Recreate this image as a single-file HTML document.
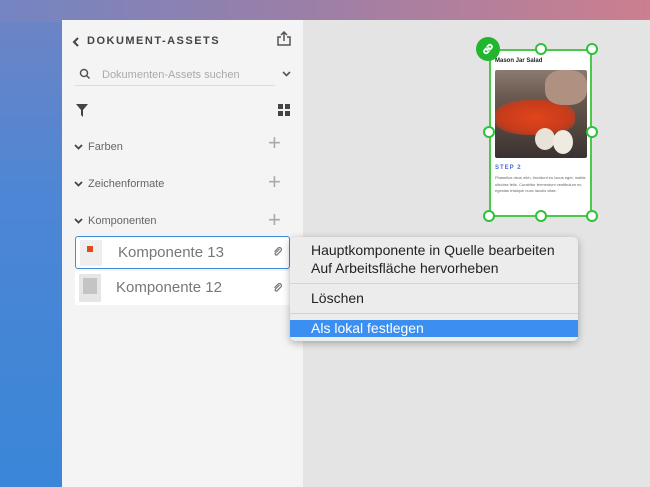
<!DOCTYPE html><html><head><meta charset="utf-8"><style>
*{margin:0;padding:0;box-sizing:border-box}
body{width:650px;height:487px;overflow:hidden;position:relative;font-family:"Liberation Sans",sans-serif;background:linear-gradient(180deg,#6f84c4 0%,#4d86d4 40%,#3a86d8 100%)}
.top{position:absolute;left:0;top:0;width:650px;height:22px;background:linear-gradient(90deg,#7385c2 0%,#9a7fa8 45%,#cc7f8e 100%)}
.canvas{position:absolute;left:303px;top:20px;width:347px;height:467px;background:#e4e4e4}
.panel{position:absolute;left:62px;top:20px;width:241px;height:467px;background:#f4f4f4;color:#555}
.a{position:absolute}
.t{font-size:11px;color:#666}
.plus{position:absolute;font-size:22px;color:#aaa;font-weight:300}
.row{position:absolute;left:13px;width:215px;background:#fff}
.menu{position:absolute;left:290px;top:237px;width:288px;height:104px;background:#ececec;border-radius:5px;box-shadow:0 2px 8px rgba(0,0,0,.3);font-size:14px;color:#222}
.menu div{position:absolute;left:21px}
.sep{position:absolute;left:0;width:288px;height:1px;background:#d4d4d4}
.h{position:absolute;width:12px;height:12px;border:2px solid #2ec23a;border-radius:50%;background:#fff}
</style></head><body>
<div class="top"></div>
<div class="canvas"></div>
<div class="panel">
<svg class="a" style="left:10px;top:17px" width="8" height="10" viewBox="0 0 8 10" fill="none" stroke="#444" stroke-width="2"><path d="M6 1L2 5l4 4"/></svg>
<div class="a" style="left:25px;top:15px;font-size:11px;font-weight:bold;letter-spacing:1.5px;color:#444">DOKUMENT-ASSETS</div>
<svg class="a" style="left:214px;top:11px" width="16" height="16" viewBox="0 0 16 16" fill="none" stroke="#555" stroke-width="1.5"><path d="M5 6H2v8h12V6h-3M8 10V1M5 4l3-3 3 3"/></svg>
<svg class="a" style="left:17px;top:48px" width="12" height="12" viewBox="0 0 12 12" fill="none" stroke="#555" stroke-width="1.5"><circle cx="5" cy="5" r="3.5"/><path d="M7.5 7.5l3 3"/></svg>
<div class="a t" style="left:40px;top:49px;color:#aaa">Dokumenten-Assets suchen</div>
<svg class="a" style="left:220px;top:51px" width="9" height="6" viewBox="0 0 9 6" fill="none" stroke="#555" stroke-width="1.6"><path d="M1 1l3.5 3.5L8 1"/></svg>
<div class="a" style="left:13px;top:65px;width:200px;height:1px;background:#ddd"></div>
<svg class="a" style="left:14px;top:84px" width="12" height="13" viewBox="0 0 12 13"><path d="M0 0h12L7 6v7L5 11V6z" fill="#444"/></svg>
<svg class="a" style="left:216px;top:84px" width="12" height="12"><rect x="0" y="0" width="5" height="5" fill="#444"/><rect x="7" y="0" width="5" height="5" fill="#444"/><rect x="0" y="7" width="5" height="5" fill="#444"/><rect x="7" y="7" width="5" height="5" fill="#444"/></svg>
<svg class="a" style="left:12px;top:124px" width="9" height="6" viewBox="0 0 9 6" fill="none" stroke="#444" stroke-width="1.8"><path d="M1 1l3.5 3.5L8 1"/></svg>
<div class="a t" style="left:26px;top:121px">Farben</div>
<div class="plus" style="left:206px;top:110px">+</div>
<svg class="a" style="left:12px;top:161px" width="9" height="6" viewBox="0 0 9 6" fill="none" stroke="#444" stroke-width="1.8"><path d="M1 1l3.5 3.5L8 1"/></svg>
<div class="a t" style="left:26px;top:158px">Zeichenformate</div>
<div class="plus" style="left:206px;top:149px">+</div>
<svg class="a" style="left:12px;top:198px" width="9" height="6" viewBox="0 0 9 6" fill="none" stroke="#444" stroke-width="1.8"><path d="M1 1l3.5 3.5L8 1"/></svg>
<div class="a t" style="left:26px;top:195px">Komponenten</div>
<div class="plus" style="left:206px;top:187px">+</div>
<div class="row" style="top:216px;height:33px;border:1px solid #3c8ed8;border-radius:3px">
<div class="a" style="left:4px;top:3px;width:22px;height:26px;background:#eee"><div class="a" style="left:7px;top:6px;width:6px;height:6px;background:#e04b1c"></div></div>
<div class="a" style="left:42px;top:7px;font-size:15px;color:#777">Komponente 13</div>
<svg class="a" style="left:197px;top:10px" width="10" height="10" viewBox="0 0 10 10" fill="none" stroke="#777" stroke-width="1.2"><path d="M6.5 2L2.5 6a1.2 1.2 0 0 0 1.7 1.7L8 3.8a2 2 0 0 0-2.8-2.8L1.5 4.8"/></svg></div>
<div class="row" style="top:251px;height:34px">
<div class="a" style="left:4px;top:3px;width:22px;height:28px;background:#e6e6e6"><div class="a" style="left:4px;top:4px;width:14px;height:16px;background:#c4c4c4"></div></div>
<div class="a" style="left:41px;top:8px;font-size:15px;color:#777">Komponente 12</div>
<svg class="a" style="left:198px;top:12px" width="10" height="10" viewBox="0 0 10 10" fill="none" stroke="#777" stroke-width="1.2"><path d="M6.5 2L2.5 6a1.2 1.2 0 0 0 1.7 1.7L8 3.8a2 2 0 0 0-2.8-2.8L1.5 4.8"/></svg></div>
</div>
<div class="a" style="left:489px;top:49px;width:103px;height:168px;background:#fff;border:2px solid #4bc94b"></div>
<div class="a" style="left:495px;top:58px;font-size:6px;font-weight:bold;color:#222">Mason Jar Salad</div>
<div class="a" style="left:495px;top:70px;width:92px;height:88px;border-radius:2px;overflow:hidden;background:linear-gradient(180deg,#8a7a70 0%,#6a5a50 30%,#3a3230 100%)">
<div class="a" style="left:0;top:30px;width:80px;height:35px;border-radius:40%;background:radial-gradient(ellipse,#e0451c 0%,#c83c1a 60%,rgba(160,50,20,0) 100%)"></div>
<div class="a" style="left:40px;top:58px;width:20px;height:22px;border-radius:50%;background:#e8e2d8"></div><div class="a" style="left:58px;top:60px;width:20px;height:24px;border-radius:50%;background:#f0ebe0"></div><div class="a" style="left:50px;top:0;width:42px;height:35px;border-radius:40%;background:#b09080"></div></div>
<div class="a" style="left:495px;top:165px;font-size:6px;font-weight:bold;color:#4a6ad8;letter-spacing:1px">STEP 2</div>
<div class="a" style="left:495px;top:175px;width:92px;font-size:4px;line-height:6.5px;color:#666">Phasellus risus nibh, tincidunt eu lacus eget, mattis ultricies felis. Curabitur fermentum vestibulum ex, egestas tristique nunc iaculis vitae.</div>
<div class="h" style="left:535px;top:43px"></div>
<div class="h" style="left:586px;top:43px"></div>
<div class="h" style="left:483px;top:126px"></div>
<div class="h" style="left:586px;top:126px"></div>
<div class="h" style="left:483px;top:210px"></div>
<div class="h" style="left:535px;top:210px"></div>
<div class="h" style="left:586px;top:210px"></div>
<div class="a" style="left:476px;top:37px;width:24px;height:24px;border-radius:50%;background:#22b52e"></div>
<svg class="a" style="left:481px;top:42px" width="14" height="14" viewBox="0 0 14 14" fill="none" stroke="#fff" stroke-width="1.8" stroke-linecap="round"><path d="M6 8l2-2M5 6.5L3.5 8a2 2 0 0 0 2.8 2.8L7.8 9.3M9 7.5l1.5-1.5a2 2 0 0 0-2.8-2.8L6.2 4.7"/></svg>
<div class="menu">
<div style="top:5px">Hauptkomponente in Quelle bearbeiten</div>
<div style="top:23px">Auf Arbeitsfläche hervorheben</div>
<span class="sep" style="top:46px"></span>
<div style="top:53px">Löschen</div>
<span class="sep" style="top:76px"></span>
<span class="a" style="left:0;top:83px;width:288px;height:17px;background:#3b8ff0"></span>
<div style="top:83px;color:#fff">Als lokal festlegen</div>
</div>
</body></html>
